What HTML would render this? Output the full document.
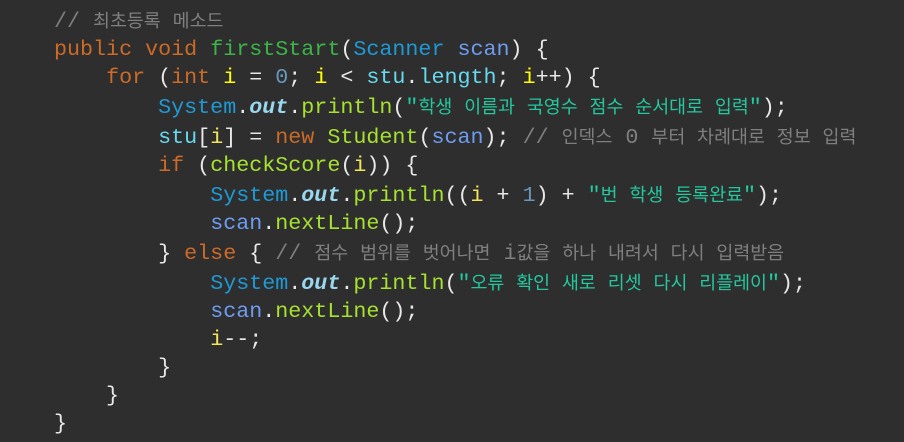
<!DOCTYPE html>
<html><head><meta charset="utf-8"><style>
html,body{margin:0;padding:0;background:#2e2e2e;width:904px;height:442px;overflow:hidden}
pre{margin:0;padding:6px 0 0 54px;font-family:"Liberation Mono","Noto Sans CJK KR",monospace;font-size:21.7px;line-height:28px;color:#e8e8e8}
.k{font-family:"Noto Sans CJK KR",sans-serif;font-size:18.4px;word-spacing:7.8px}
.c{color:#7f7f7f}.kw{color:#cc6a28}.fn{color:#3cb44a}.ty{color:#1e9ad6}.pa{color:#6e9cf0}
.m{color:#a6e22e}.s{color:#24c79e}.n{color:#6897bb}.i{color:#f2e55a}.iy{color:#ffff00}.st{color:#66d9ef}
.o{color:#9ad8f0;font-style:italic;font-weight:bold}
</style></head><body><pre><span class="c">// <span class="k">최초등록 메소드</span></span>
<span class="kw">public void</span> <span class="fn">firstStart</span>(<span class="ty">Scanner</span> <span class="pa">scan</span>) {
    <span class="kw">for</span> (<span class="kw">int</span> <span class="iy">i</span> = <span class="n">0</span>; <span class="iy">i</span> &lt; <span class="st">stu</span>.<span class="st">length</span>; <span class="iy">i</span>++) {
        <span class="ty">System</span>.<span class="o">out</span>.<span class="m">println</span>(<span class="s">"<span class="k">학생 이름과 국영수 점수 순서대로 입력</span>"</span>);
        <span class="st">stu</span>[<span class="i">i</span>] = <span class="kw">new</span> <span class="m">Student</span>(<span class="pa">scan</span>); <span class="c">// <span class="k">인덱스</span> 0 <span class="k">부터 차례대로 정보 입력</span></span>
        <span class="kw">if</span> (<span class="m">checkScore</span>(<span class="i">i</span>)) {
            <span class="ty">System</span>.<span class="o">out</span>.<span class="m">println</span>((<span class="i">i</span> + <span class="n">1</span>) + <span class="s">"<span class="k">번 학생 등록완료</span>"</span>);
            <span class="pa">scan</span>.<span class="m">nextLine</span>();
        } <span class="kw">else</span> { <span class="c">// <span class="k">점수 범위를 벗어나면</span> i<span class="k">값을 하나 내려서 다시 입력받음</span></span>
            <span class="ty">System</span>.<span class="o">out</span>.<span class="m">println</span>(<span class="s">"<span class="k">오류 확인 새로 리셋 다시 리플레이</span>"</span>);
            <span class="pa">scan</span>.<span class="m">nextLine</span>();
            <span class="i">i</span>--;
        }
    }
}</pre></body></html>
